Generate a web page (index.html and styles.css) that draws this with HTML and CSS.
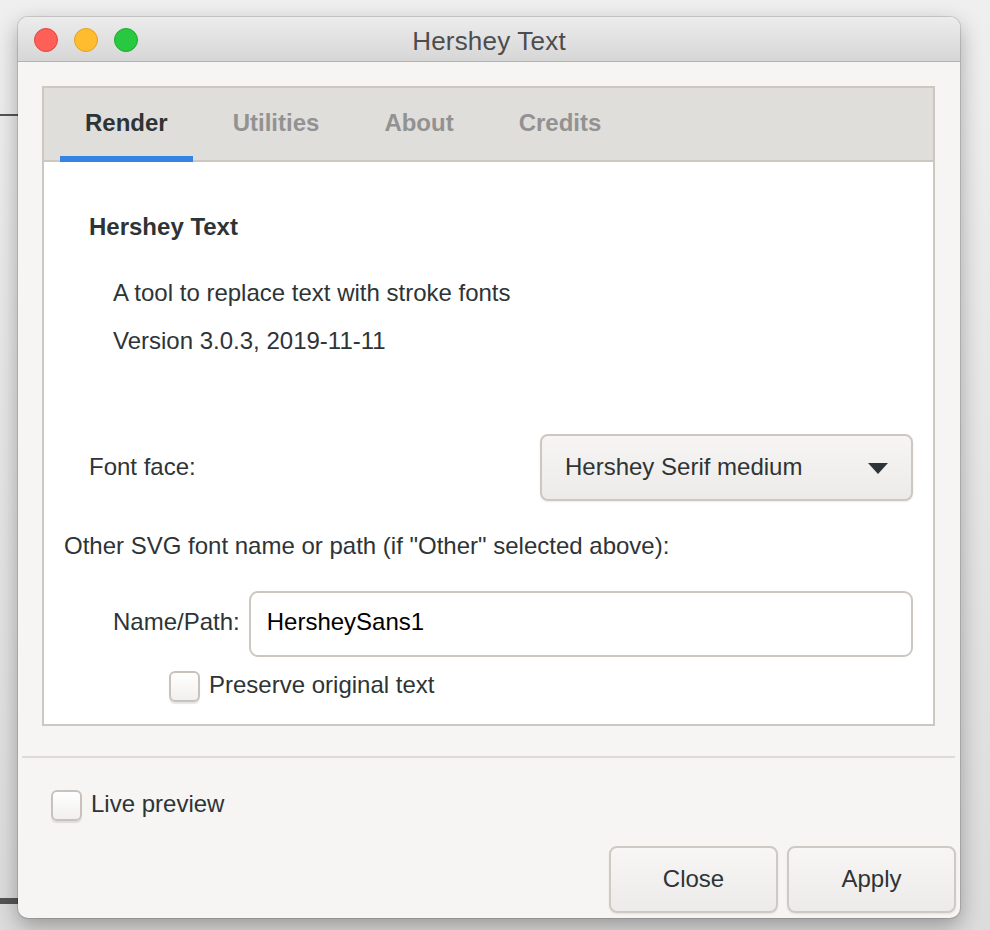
FILE: index.html
```html
<!DOCTYPE html>
<html>
<head>
<meta charset="utf-8">
<title>Hershey Text</title>
<link rel="stylesheet" href="styles.css">
</head>
<body>
<div class="window">
  <div class="titlebar">
    <div class="lights">
      <span class="light red"></span>
      <span class="light yellow"></span>
      <span class="light green"></span>
    </div>
    <div class="title">Hershey Text</div>
  </div>
  <div class="body">
    <div class="notebook">
      <div class="tabs">
        <div class="tab active">Render</div>
        <div class="tab">Utilities</div>
        <div class="tab">About</div>
        <div class="tab">Credits</div>
      </div>
      <div class="page">
        <div class="heading">Hershey Text</div>
        <div class="desc first">A tool to replace text with stroke fonts</div>
        <div class="desc second">Version 3.0.3, 2019-11-11</div>
        <div class="row font-row">
          <span class="label">Font face:</span>
          <div class="combo">
            <span>Hershey Serif medium</span>
            <svg class="arrow" width="20" height="11" viewBox="0 0 20 11"><path d="M0 0 H20 L10 11 Z" fill="#2e3436"/></svg>
          </div>
        </div>
        <div class="other">Other SVG font name or path (if "Other" selected above):</div>
        <div class="row name-row">
          <span class="label name-label">Name/Path:</span>
          <div class="entry">HersheySans1</div>
        </div>
        <div class="row check-row preserve">
          <span class="check"></span>
          <span class="check-text">Preserve original text</span>
        </div>
      </div>
    </div>
    <div class="separator"></div>
    <div class="footer">
      <div class="row check-row live">
        <span class="check"></span>
        <span class="check-text">Live preview</span>
      </div>
      <div class="buttons">
        <div class="button">Close</div>
        <div class="button">Apply</div>
      </div>
    </div>
  </div>
</div>
</body>
</html>
```
FILE: styles.css
```css
html, body {
  margin: 0;
  padding: 0;
}
body {
  width: 990px;
  height: 930px;
  overflow: hidden;
  font-family: "Liberation Sans", Arial, sans-serif;
  color: #2e3436;
  background:
    linear-gradient(#555555, #555555) 0 114px / 18px 2px no-repeat,
    linear-gradient(#555555, #555555) 0 898px / 18px 6px no-repeat,
    linear-gradient(#efefef, #dcdcdc);
  padding-top: 17px;
  box-sizing: border-box;
}
.window {
  margin-left: 18px;
  width: 942px;
  height: 901px;
  border-radius: 10px;
  background: #f6f5f4;
  box-shadow: 0 0 0 1px rgba(0,0,0,0.12), 0 8px 22px rgba(0,0,0,0.32);
  overflow: hidden;
  display: flex;
  flex-direction: column;
}
.titlebar {
  height: 44px;
  border-bottom: 1px solid #b3b3b3;
  background: linear-gradient(#ececec, #d6d6d6);
  display: flex;
  align-items: center;
  position: relative;
}
.lights {
  display: flex;
  gap: 16px;
  padding-left: 16px;
  padding-top: 2px;
}
.light {
  width: 22px;
  height: 22px;
  border-radius: 50%;
  border: 1px solid;
}
.red { background: #fe5f57; border-color: #e2463f; }
.yellow { background: #febc2e; border-color: #e1a325; }
.green { background: #28c840; border-color: #1eab2f; }
.title {
  position: absolute;
  left: 0;
  right: 0;
  top: 0;
  bottom: 0;
  display: flex;
  align-items: center;
  justify-content: center;
  font-size: 26px;
  letter-spacing: 0.2px;
  color: #4d4d4d;
  padding-top: 4px;
}
.body {
  flex: 1;
  display: flex;
  flex-direction: column;
  padding-top: 24px;
}
.notebook {
  margin: 0 25px 0 24px;
  border: 2px solid #cdc7c2;
  background: #ffffff;
}
.tabs {
  height: 72px;
  background: #e0deda;
  border-bottom: 2px solid #cdc7c2;
  display: flex;
  gap: 15px;
  padding-left: 16px;
}
.tab {
  padding: 0 25px;
  display: flex;
  align-items: center;
  font-size: 24px;
  font-weight: bold;
  color: #929292;
  position: relative;
  margin-bottom: -2px;
  padding-bottom: 4px;
}
.tab.active {
  color: #2e3436;
  border-bottom: 6px solid #3584e4;
  padding-bottom: 0;
  padding-top: 2px;
}
.page {
  padding: 51px 20px 22px 20px;
  font-size: 24px;
  line-height: 28px;
}
.heading {
  font-weight: bold;
  margin-left: 25px;
  height: 28px;
}
.desc {
  margin-left: 49px;
  height: 28px;
}
.desc.first { margin-top: 38px; }
.desc.second { margin-top: 20px; }
.row {
  display: flex;
  align-items: center;
}
.font-row {
  margin-top: 79px;
  height: 67px;
  justify-content: space-between;
}
.label {
  margin-left: 25px;
  padding-bottom: 2px;
}
.combo {
  width: 373px;
  height: 67px;
  box-sizing: border-box;
  border: 2px solid #cdc7c2;
  border-radius: 8px;
  background: linear-gradient(#f6f5f4, #edebe9);
  box-shadow: 0 1px 2px rgba(0,0,0,0.08);
  display: flex;
  align-items: center;
  justify-content: space-between;
  padding: 0 23px 2px 23px;
}
.arrow {
  display: block;
  margin-top: 4px;
}
.other {
  margin-top: 31px;
  height: 28px;
}
.name-row {
  margin-top: 31px;
  height: 66px;
}
.name-label {
  margin-left: 49px;
  margin-right: 9px;
  padding-bottom: 4px;
}
.entry {
  flex: 1;
  height: 66px;
  box-sizing: border-box;
  border: 2px solid #cdc7c2;
  border-radius: 9px;
  background: #ffffff;
  color: #000000;
  display: flex;
  align-items: center;
  padding-left: 16px;
  padding-bottom: 4px;
}
.check-row {
  height: 31px;
  gap: 9px;
}
.check-text {
  padding-bottom: 3px;
}
.preserve {
  margin-top: 14px;
  padding-left: 105px;
}
.check {
  width: 31px;
  height: 31px;
  box-sizing: border-box;
  border: 2px solid #c9c2bb;
  border-radius: 6px;
  background: linear-gradient(#ffffff, #f1f0ee);
  box-shadow: 0 2px 1px rgba(0,0,0,0.1);
  flex: none;
}
.separator {
  margin: 30px 5px 0 4px;
  height: 2px;
  background: #dedbd7;
}
.footer {
  display: flex;
  flex-direction: column;
  font-size: 24px;
  line-height: 28px;
}
.live {
  margin-top: 32px;
  padding-left: 33px;
}
.buttons {
  margin-top: 25px;
  display: flex;
  justify-content: flex-end;
  gap: 9px;
  padding-right: 4px;
}
.button {
  width: 169px;
  height: 67px;
  box-sizing: border-box;
  border: 2px solid #cfc9c3;
  border-radius: 8px;
  background: linear-gradient(#f7f6f5, #edebe9);
  box-shadow: 0 1px 2px rgba(0,0,0,0.08);
  display: flex;
  align-items: center;
  justify-content: center;
  padding-bottom: 2px;
}
```
